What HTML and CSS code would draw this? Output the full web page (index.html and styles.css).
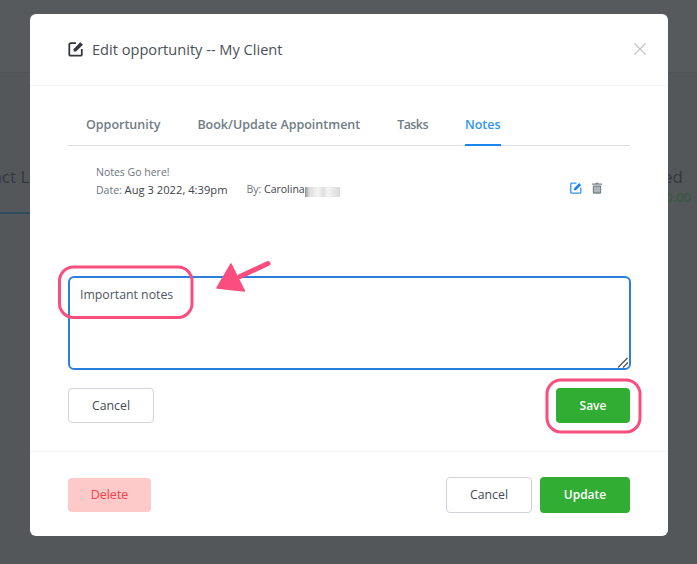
FILE: index.html
```html
<!DOCTYPE html>
<html lang="en">
<head>
<meta charset="utf-8">
<title>Edit opportunity</title>
<link rel="stylesheet" href="styles.css">
</head>
<body>
<div class="page">
  <div class="topbar"></div>
  <div class="board">
    <div class="col col-left"><span class="col-title">Contact Leads</span></div>
    <div class="col col-right"><span class="col-title">Closed</span><span class="col-sum">$0.00</span></div>
  </div>
</div>
<div class="modal">
  <header class="modal-head">
    <svg class="head-icon" viewBox="0 0 16 16" width="16" height="16"><path d="M8 2.2H2.6A1.3 1.3 0 0 0 1.3 3.5v9.9a1.3 1.3 0 0 0 1.3 1.3h9.9a1.3 1.3 0 0 0 1.3-1.3V8" fill="none" stroke="#33383e" stroke-width="1.8"/><path d="M5.6 10.6V8.2L12.200 1.200l2.800 2.600-7 6.800z" fill="#33383e"/></svg>
    <h2 class="modal-title">Edit opportunity -- My Client</h2>
    <svg class="close" viewBox="0 0 12 12" width="12" height="12"><path d="M.5.5l11 11M11.5.5l-11 11" stroke="#c2c6ca" stroke-width="1.2" fill="none"/></svg>
  </header>
  <div class="modal-body">
    <nav class="tabs">
      <a class="tab">Opportunity</a>
      <a class="tab">Book/Update Appointment</a>
      <a class="tab tab-tight">Tasks</a>
      <a class="tab active">Notes</a>
    </nav>
    <div class="note">
      <div class="note-text">
        <div>Notes Go here!</div>
        <div class="note-meta">
          <span>Date: <b>Aug 3 2022, 4:39pm</b></span>
          <span class="by"><span>By: <b>Carolina</b></span><i class="blur"></i></span>
        </div>
      </div>
      <div class="note-actions">
        <svg viewBox="0 0 12 12" width="12" height="12"><path d="M6.5 1.2H1.6a.8.8 0 0 0-.8.8v8.4a.8.8 0 0 0 .8.8H10a.8.8 0 0 0 .8-.8V5.6" fill="none" stroke="#2f95f3" stroke-width="1.3"/><path d="M4 8.2V6.4L9.2 1l1.9 1.9L5.8 8.2z" fill="#1a7fe0"/></svg>
        <svg viewBox="0 0 12 12" width="12" height="12"><path d="M4.4 1.6V.7h3.2v.9H11v1.1H1V1.600z" fill="#7b868c"/><path d="M1.8 3.4h8.4v7.4a.9.9 0 0 1-.9.9H2.7a.9.9 0 0 1-.9-.9z" fill="#7b868c"/><path d="M4 4.8v5.4M6 4.8v5.4M8 4.8v5.4" stroke="#fff" stroke-width=".8"/></svg>
      </div>
    </div>
    <div class="editor">
      <textarea class="note-input">Important notes</textarea>
      <div class="editor-actions">
        <button class="btn btn-outline">Cancel</button>
        <button class="btn btn-green">Save</button>
      </div>
    </div>
  </div>
  <footer class="modal-foot">
    <button class="btn btn-danger">Delete</button>
    <div class="foot-right">
      <button class="btn btn-outline btn-tall">Cancel</button>
      <button class="btn btn-green btn-update">Update</button>
    </div>
  </footer>
</div>
<svg class="marks" viewBox="0 0 697 564" width="697" height="564">
  <path d="M618 367.500L627.500 358M623 367.500L628 362.500" stroke="#555" stroke-width="1.300" fill="none"/>
  <rect x="59.500" y="267" width="132.500" height="50.500" rx="14" class="ring"/>
  <rect x="547" y="380" width="93" height="52" rx="14" class="ring"/>
  <path d="M268 263.500L240 276.500" stroke="#fa4f7e" stroke-width="5" stroke-linecap="round" fill="none"/>
  <path d="M231 264L217 288 244.500 291z" fill="#fa4f7e" stroke="#fa4f7e" stroke-width="1.500" stroke-linejoin="round"/>
</svg>
</body>
</html>
```
FILE: styles.css
```css
* { box-sizing: border-box; }
html, body { margin: 0; padding: 0; }
body {
  width: 697px;
  height: 564px;
  overflow: hidden;
  position: relative;
  background: #53575a;
  font-family: "Open Sans", "Noto Sans", sans-serif;
  color: #4b5563;
}
.page { height: 564px; }
.topbar { height: 73px; background: #565a5d; border-bottom: 1px solid #4e5255; }
.board { display: flex; justify-content: space-between; padding-top: 93px; overflow: hidden; }
.col { display: flex; flex-direction: column; }
.col-title { font-size: 17px; line-height: 22px; color: #33383d; white-space: nowrap; }
.col-left { width: 60px; height: 48px; border-bottom: 2px solid #2b4b5f; overflow: hidden; }
.col-left .col-title { margin-left: -45px; }
.col-right { align-items: flex-end; padding-right: 6px; }
.col-right .col-title { margin-right: 8px; }
.col-sum { font-size: 13px; line-height: 18px; color: #2f5d33; }
.modal {
  position: absolute;
  left: 30px;
  top: 14px;
  width: 638px;
  height: 522px;
  background: #fff;
  border-radius: 6px;
  display: flex;
  flex-direction: column;
}
.modal-head {
  height: 72px;
  display: flex;
  align-items: center;
  padding: 0 22px 0 38px;
  border-bottom: 1px solid #f3f4f6;
}
.head-icon { margin-right: 8px; margin-top: -2px; }
.modal-title { margin: -2px 0 0; flex: 1; font-size: 14.600px; font-weight: 400; color: #4a5057; }
.close { margin-top: -1px; }
.modal-body { flex: 1; padding: 0 38px; display: flex; flex-direction: column; }
.tabs { display: flex; gap: 37px; padding-left: 18px; height: 60px; border-bottom: 1px solid #dcdfe2; }
.tab { font-size: 12.500px; font-weight: 600; line-height: 18px; padding-top: 30px; height: 60px; color: #6f7c85; }
.tab-tight { letter-spacing: -.6px; }
.tab.active { color: #2f95f3; border-bottom: 2px solid #1a85ec; }
.note { display: flex; justify-content: space-between; padding: 18px 27px 0 28px; font-size: 10.500px; line-height: 17px; color: #6b7480; height: 130px; }
.note-meta { display: flex; gap: 19px; }
.note-meta b { font-weight: 400; font-size: 11.200px; color: #3d444c; }
.by { display: flex; }
.by b { font-size: 10.500px; }
.blur { display: block; width: 35px; height: 10px; margin-top: 6px; background: linear-gradient(90deg, #8f9294 0, #dcdcdc 12%, #f4f4f4 38%, #dedede 52%, #f4f4f4 66%, #d8d8d8 100%); }
.note-actions { display: flex; gap: 9px; padding-top: 18px; }
.editor { display: flex; flex-direction: column; }
.note-input {
  display: block;
  width: 563px;
  height: 94px;
  border: 2px solid #2b7fdc;
  border-radius: 6px;
  padding: 7px 10px;
  font: 12.300px/20px "Open Sans", "Noto Sans", sans-serif;
  color: #4b5563;
  outline: none;
  resize: none;
}
.editor-actions { display: flex; justify-content: space-between; margin-top: 18px; width: 562px; }
.btn {
  width: 86px;
  height: 35px;
  border-radius: 4px;
  border: 1px solid transparent;
  font: 600 12px/1 "Open Sans", "Noto Sans", sans-serif;
  padding: 0;
}
.btn-outline { background: #fff; border-color: #d1d2db; color: #434a55; font-weight: 500; font-size: 12.300px; padding-top: 1px; }
.btn-green { background: #32ad33; color: #fff; width: 74px; }
.btn-tall { height: 36px; padding-top: 0; }
.btn-update { width: 90px; height: 36px; }
.btn-danger { background: #fec9c9; color: #f0414b; width: 83px; height: 34px; margin-top: 1px; font-weight: 500; font-size: 12.500px; }
.modal-foot {
  height: 85px;
  border-top: 1px solid #f3f4f6;
  padding: 25px 38px 0;
  display: flex;
  justify-content: space-between;
  align-items: flex-start;
}
.foot-right { display: flex; gap: 8px; }
.marks { position: absolute; left: 0; top: 0; pointer-events: none; }
.ring { fill: none; stroke: #fa4f7e; stroke-width: 3; }
```
